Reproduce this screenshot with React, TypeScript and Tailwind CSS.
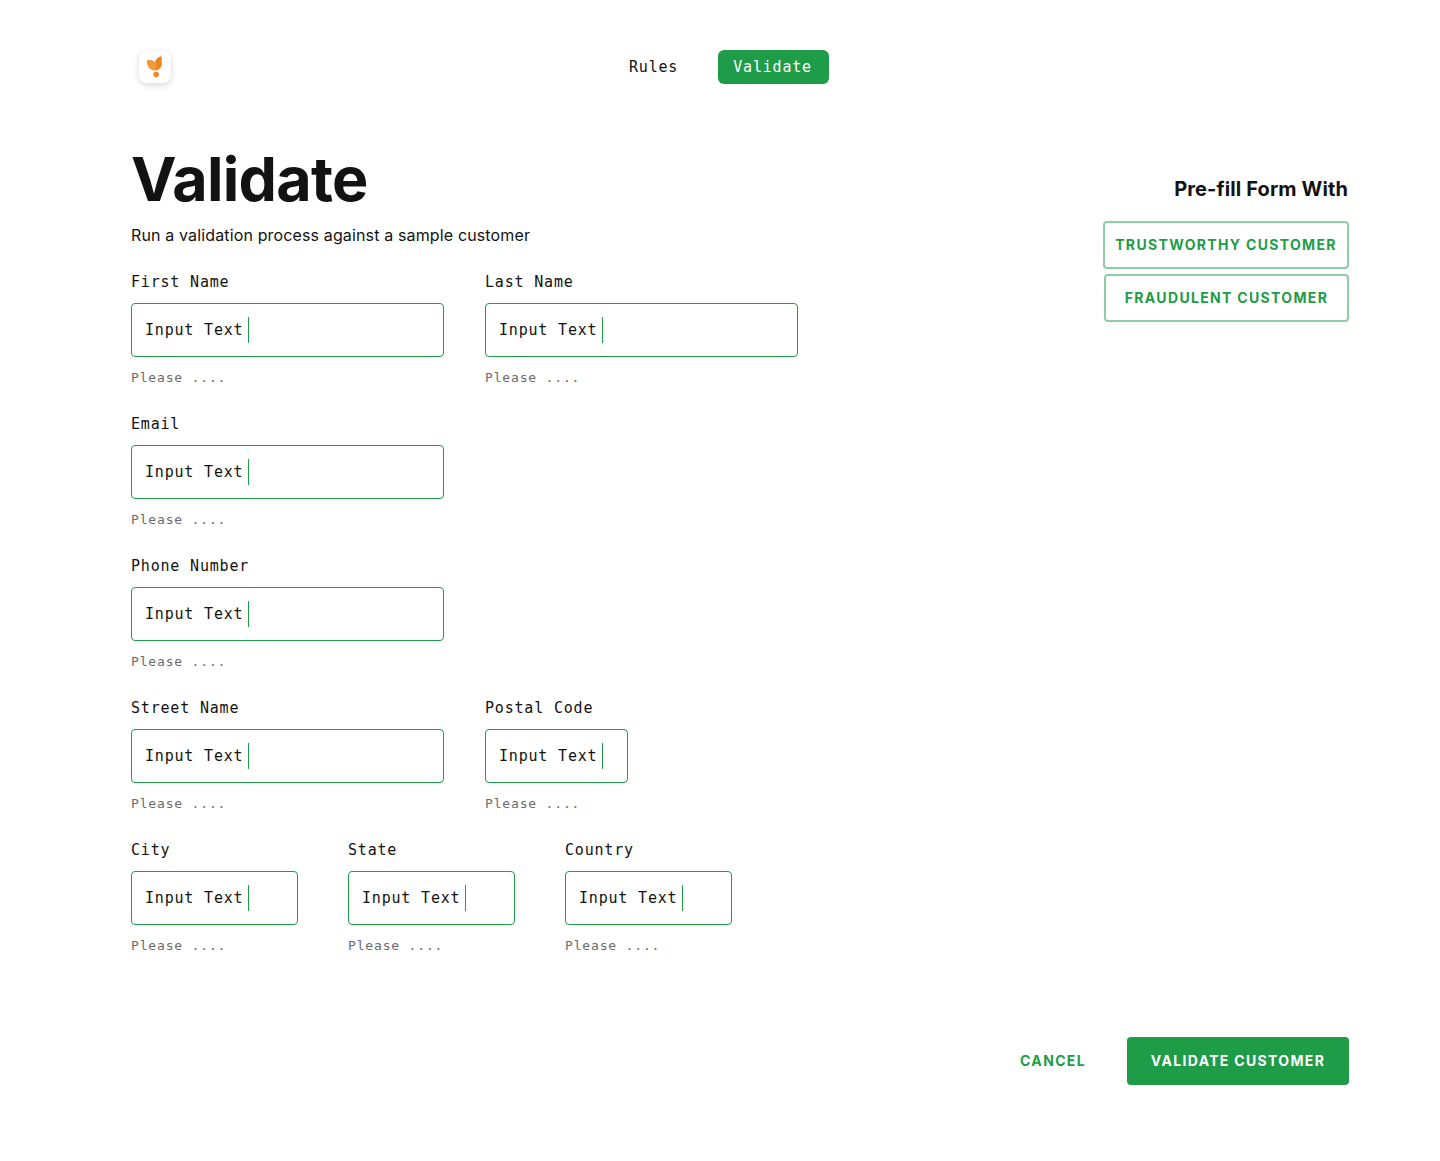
type FieldProps = { label: string; width: string };

const mono = "font-['DejaVu_Sans_Mono',monospace]";

function Field({ label, width }: FieldProps) {
  return (
    <div className={`${width} ${mono} flex h-[142px] shrink-0 flex-col text-[#121212]`}>
      <label className="text-[15px] leading-6 tracking-[0.81px] whitespace-nowrap">{label}</label>
      <div className="mt-[9px] flex h-[54px] shrink-0 items-center rounded-[4px] border border-[#1e9c48] pl-[13px]">
        <span className="text-[15px] leading-6 tracking-[0.81px] whitespace-nowrap">Input Text</span>
        <span className="ml-[5px] h-[26px] w-px bg-[#1e9c48]" />
      </div>
      <p className="mt-[11px] text-[13px] leading-5 tracking-[0.83px] text-[#6b6b6b]">Please ....</p>
    </div>
  );
}

function Logo() {
  return (
    <div className="flex h-8 w-8 items-center justify-center rounded-lg bg-white shadow-[0_2px_6px_rgba(0,0,0,0.16)]">
      <svg width="32" height="32" viewBox="0 0 32 32">
        <path d="M22.700 5.300C19.200 6 16.400 8.300 16.100 11.500L17.200 19.600C21.500 18.400 22.900 15.500 22.800 12Z" fill="#ee8420" />
        <path d="M7.900 9.400C10.500 8.300 16.800 9 17.300 14.500V19.600C11.500 19.300 7.600 16.500 7.900 9.400Z" fill="#f3993d" />
        <circle cx="17.200" cy="23.500" r="2.800" fill="#f08626" />
      </svg>
    </div>
  );
}

export default function App() {
  return (
    <div className="h-[1161px] w-[1440px] bg-white font-['Inter',sans-serif] text-[#121212]">
      <header className="flex h-[149px] items-start pt-[50px] pl-[139px]">
        <div className="mt-px"><Logo /></div>
        <nav className={`${mono} ml-[442px] flex items-center gap-[23.5px] text-[15px] tracking-[0.81px]`}>
          <a className="flex h-[34px] items-center px-4">Rules</a>
          <a className="flex h-[34px] w-[111px] items-center rounded-[6px] bg-[#1e9c48] pl-[15.5px] text-white">Validate</a>
        </nav>
      </header>
      <main className="flex justify-between pr-[91px] pl-[131px]">
        <div>
          <h1 className="h-[74px] text-[61px] leading-[60px] font-bold tracking-[-0.7px]">Validate</h1>
          <p className="h-[47px] text-base leading-6 tracking-[0.14px]">Run a validation process against a sample customer</p>
          <div className="flex gap-[41px]">
            <Field label="First Name" width="w-[313px]" />
            <Field label="Last Name" width="w-[313px]" />
          </div>
          <Field label="Email" width="w-[313px]" />
          <Field label="Phone Number" width="w-[313px]" />
          <div className="flex gap-[41px]">
            <Field label="Street Name" width="w-[313px]" />
            <Field label="Postal Code" width="w-[143px]" />
          </div>
          <div className="flex gap-[50px]">
            <Field label="City" width="w-[167px]" />
            <Field label="State" width="w-[167px]" />
            <Field label="Country" width="w-[167px]" />
          </div>
        </div>
        <aside className="flex flex-col items-end pt-[25px]">
          <h2 className="mr-px text-xl leading-[30px] font-bold tracking-[0.12px]">Pre-fill Form With</h2>
          <button className="mt-[17px] h-12 w-[246px] rounded-[4px] border-2 border-[#8fcea4] text-sm font-bold tracking-[1.33px] whitespace-nowrap text-[#1e9c48]">TRUSTWORTHY CUSTOMER</button>
          <button className="mt-[5px] h-12 w-[245px] rounded-[4px] border-2 border-[#8fcea4] text-sm font-bold tracking-[1.33px] whitespace-nowrap text-[#1e9c48]">FRAUDULENT CUSTOMER</button>
        </aside>
      </main>
      <footer className="mt-[57px] flex justify-end pr-[91px] text-sm font-bold tracking-[1.33px]">
        <button className="mr-[17px] h-12 w-[114px] text-[#1e9c48]">CANCEL</button>
        <button className="h-12 w-[222px] rounded-[4px] bg-[#1e9c48] text-white">VALIDATE CUSTOMER</button>
      </footer>
    </div>
  );
}
